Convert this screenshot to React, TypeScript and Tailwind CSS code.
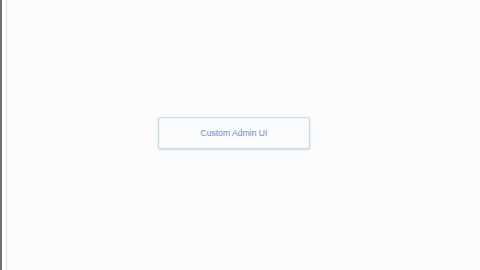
export default function App() {
  return (
    <div className="flex h-[270px] w-[480px] bg-[#fcfcfc] font-['Liberation_Sans',Arial,sans-serif]">
      <div className="w-[2px] bg-[#6f6f6f]" />
      <div className="w-[4px] bg-white" />
      <div className="w-px bg-[#e2e2e2]" />
      <div className="flex flex-1 items-start pl-[151px] pt-[117px]">
        <button className="flex h-[32px] w-[152px] items-center justify-center rounded-[2px] border border-[#c6dae8] bg-[#fbfcfd] text-[8.6px] text-[#6a8cca] shadow-[inset_0_0_0_1px_#f4f8fb,0_1px_2px_rgba(150,180,205,0.45)]">
          Custom Admin UI
        </button>
      </div>
    </div>
  );
}
